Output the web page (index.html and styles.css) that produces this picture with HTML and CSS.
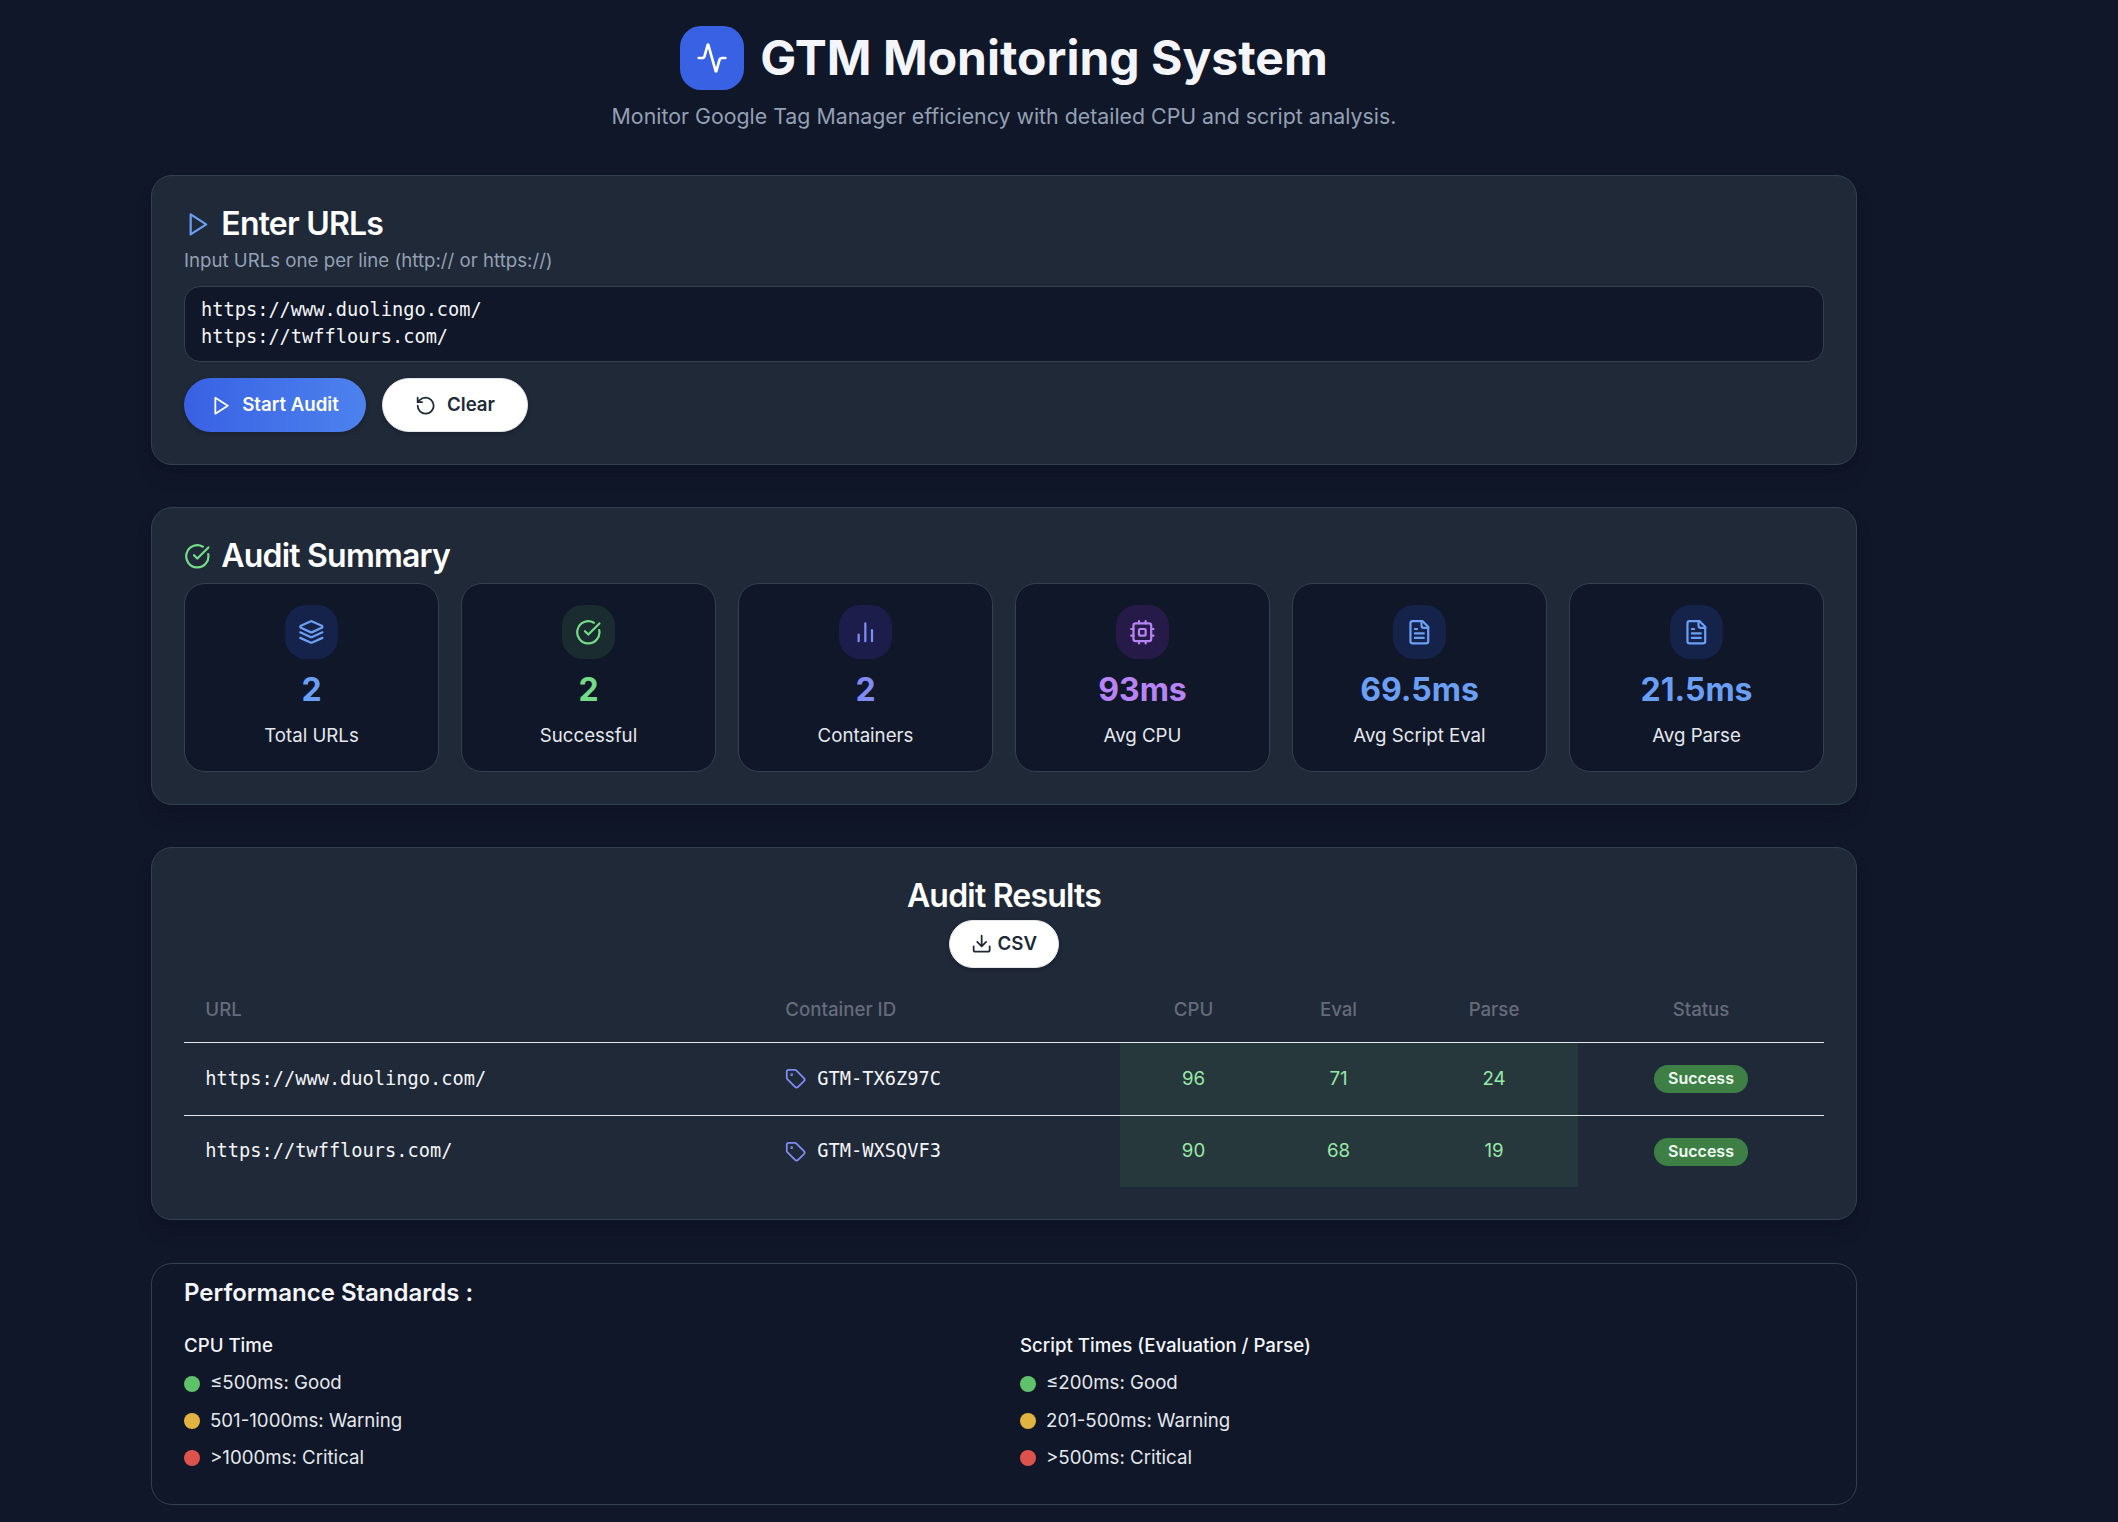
FILE: index.html
```html
<!DOCTYPE html>
<html lang="en">
<head>
<meta charset="utf-8">
<title>GTM Monitoring System</title>
<link rel="stylesheet" href="styles.css">
</head>
<body>
<svg class="sprite" aria-hidden="true">
  <symbol id="activity" viewBox="0 0 24 24"><path d="M22 12h-2.48a2 2 0 0 0-1.93 1.46l-2.35 8.36a.25.25 0 0 1-.48 0L9.24 2.18a.25.25 0 0 0-.48 0l-2.35 8.36A2 2 0 0 1 4.49 12H2"/></symbol>
  <symbol id="play" viewBox="0 0 24 24"><polygon points="6 3 20 12 6 21 6 3"/></symbol>
  <symbol id="reset" viewBox="0 0 24 24"><path d="M3 12a9 9 0 1 0 9-9 9.75 9.75 0 0 0-6.74 2.74L3 8"/><path d="M3 3v5h5"/></symbol>
  <symbol id="check" viewBox="0 0 24 24"><path d="M21.801 10A10 10 0 1 1 17 3.335"/><path d="m9 11 3 3L22 4"/></symbol>
  <symbol id="layers" viewBox="0 0 24 24"><path d="m12.83 2.18a2 2 0 0 0-1.66 0L2.6 6.08a1 1 0 0 0 0 1.83l8.58 3.91a2 2 0 0 0 1.66 0l8.58-3.9a1 1 0 0 0 0-1.83Z"/><path d="m22 12-9.17 4.16a2 2 0 0 1-1.66 0L2 12"/><path d="m22 17-9.17 4.16a2 2 0 0 1-1.66 0L2 17"/></symbol>
  <symbol id="bars" viewBox="0 0 24 24"><path d="M18 20V10M12 20V4M6 20v-6"/></symbol>
  <symbol id="cpu" viewBox="0 0 24 24"><rect x="4" y="4" width="16" height="16" rx="2"/><rect x="9" y="9" width="6" height="6" rx="1"/><path d="M15 2v2M15 20v2M2 15h2M2 9h2M20 15h2M20 9h2M9 2v2M9 20v2"/></symbol>
  <symbol id="file" viewBox="0 0 24 24"><path d="M15 2H6a2 2 0 0 0-2 2v16a2 2 0 0 0 2 2h12a2 2 0 0 0 2-2V7Z"/><path d="M14 2v4a2 2 0 0 0 2 2h4M10 9H8M16 13H8M16 17H8"/></symbol>
  <symbol id="download" viewBox="0 0 24 24"><path d="M21 15v4a2 2 0 0 1-2 2H5a2 2 0 0 1-2-2v-4"/><path d="m7 10 5 5 5-5M12 15V3"/></symbol>
  <symbol id="tag" viewBox="0 0 24 24"><path d="M12.586 2.586A2 2 0 0 0 11.172 2H4a2 2 0 0 0-2 2v7.172a2 2 0 0 0 .586 1.414l8.704 8.704a2.426 2.426 0 0 0 3.420 0l6.580-6.580a2.426 2.426 0 0 0 0-3.420z"/><circle cx="7.500" cy="7.500" r=".5" fill="currentColor"/></symbol>
</svg>

<main class="page">
  <header class="header">
    <div class="brand">
      <span class="logo"><svg class="icon"><use href="#activity"/></svg></span>
      <h1 class="brand-title">GTM Monitoring System</h1>
    </div>
    <p class="tagline">Monitor Google Tag Manager efficiency with detailed CPU and script analysis.</p>
  </header>

  <section class="card entry">
    <h2 class="title"><svg class="icon blue"><use href="#play"/></svg>Enter URLs</h2>
    <p class="hint">Input URLs one per line (http:// or https://)</p>
    <div class="urls">https://www.duolingo.com/<br>https://twfflours.com/</div>
    <div class="actions">
      <button class="btn start"><svg class="icon"><use href="#play"/></svg>Start Audit</button>
      <button class="btn clear"><svg class="icon"><use href="#reset"/></svg>Clear</button>
    </div>
  </section>

  <section class="card summary">
    <h2 class="title"><svg class="icon green"><use href="#check"/></svg>Audit Summary</h2>
    <div class="tiles">
      <div class="tile blue"><span class="badge-icon"><svg class="icon"><use href="#layers"/></svg></span><strong class="value">2</strong><span class="label">Total URLs</span></div>
      <div class="tile green"><span class="badge-icon"><svg class="icon"><use href="#check"/></svg></span><strong class="value">2</strong><span class="label">Successful</span></div>
      <div class="tile indigo"><span class="badge-icon"><svg class="icon"><use href="#bars"/></svg></span><strong class="value">2</strong><span class="label">Containers</span></div>
      <div class="tile purple"><span class="badge-icon"><svg class="icon"><use href="#cpu"/></svg></span><strong class="value">93ms</strong><span class="label">Avg CPU</span></div>
      <div class="tile blue"><span class="badge-icon"><svg class="icon"><use href="#file"/></svg></span><strong class="value">69.5ms</strong><span class="label">Avg Script Eval</span></div>
      <div class="tile blue"><span class="badge-icon"><svg class="icon"><use href="#file"/></svg></span><strong class="value">21.5ms</strong><span class="label">Avg Parse</span></div>
    </div>
  </section>

  <section class="card results">
    <h2 class="title">Audit Results</h2>
    <button class="btn csv"><svg class="icon"><use href="#download"/></svg>CSV</button>
    <table class="table">
      <colgroup><col class="c-url"><col class="c-id"><col class="c-cpu"><col class="c-eval"><col class="c-parse"><col class="c-status"></colgroup>
      <thead><tr><th class="left">URL</th><th class="left">Container ID</th><th>CPU</th><th>Eval</th><th>Parse</th><th>Status</th></tr></thead>
      <tbody>
        <tr><td class="mono">https://www.duolingo.com/</td><td class="mono"><span class="container-id"><svg class="icon indigo"><use href="#tag"/></svg>GTM-TX6Z97C</span></td><td class="good">96</td><td class="good">71</td><td class="good">24</td><td class="center"><span class="pill">Success</span></td></tr>
        <tr><td class="mono">https://twfflours.com/</td><td class="mono"><span class="container-id"><svg class="icon indigo"><use href="#tag"/></svg>GTM-WXSQVF3</span></td><td class="good">90</td><td class="good">68</td><td class="good">19</td><td class="center"><span class="pill">Success</span></td></tr>
      </tbody>
    </table>
  </section>

  <section class="card standards">
    <h3 class="standards-title">Performance Standards :</h3>
    <div class="standards-grid">
      <div>
        <h4 class="group">CPU Time</h4>
        <ul class="legend"><li><i class="dot ok"></i>≤500ms: Good</li><li><i class="dot warn"></i>501-1000ms: Warning</li><li><i class="dot bad"></i>&gt;1000ms: Critical</li></ul>
      </div>
      <div>
        <h4 class="group">Script Times (Evaluation / Parse)</h4>
        <ul class="legend"><li><i class="dot ok"></i>≤200ms: Good</li><li><i class="dot warn"></i>201-500ms: Warning</li><li><i class="dot bad"></i>&gt;500ms: Critical</li></ul>
      </div>
    </div>
  </section>
</main>
</body>
</html>
```
FILE: styles.css
```css
* { box-sizing: border-box; margin: 0; padding: 0; }

html, body { background: #101728; }

body {
  height: 1522px;
  overflow: hidden;
  color: #f3f5fa;
  font: 400 18.67px/26.67px Inter, "Liberation Sans", sans-serif;
}

.sprite { position: absolute; width: 0; height: 0; }

.icon {
  display: block;
  flex: none;
  width: 21.33px;
  height: 21.33px;
  fill: none;
  stroke: currentColor;
  stroke-width: 2;
  stroke-linecap: round;
  stroke-linejoin: round;
}

.blue { color: #6b9ff5; }
.green { color: #74dc87; }
.indigo { color: #818bf5; }
.purple { color: #b883f5; }

.page {
  display: flex;
  flex-direction: column;
  gap: 42px;
  width: 1706px;
  margin-left: 151px;
  padding-top: 26px;
}

.header { display: flex; flex-direction: column; align-items: center; height: 107px; }
.brand { display: flex; align-items: center; gap: 16px; height: 64px; }
.logo {
  display: grid;
  place-items: center;
  width: 64px;
  height: 64px;
  border-radius: 21px;
  background: #3861e3;
  color: #fff;
}
.logo .icon { width: 32px; height: 32px; }
.brand-title { padding-bottom: 2px; font-size: 48px; line-height: 53px; font-weight: 700; }
.tagline { margin-top: 9px; font-size: 21.33px; line-height: 34px; color: #94a0b4; }

.card {
  border: 1px solid #334050;
  border-radius: 21px;
  background: #202938;
  padding: 32px;
  box-shadow: 0 13px 20px -4px rgba(12, 15, 32, .2), 0 5px 8px -5px rgba(12, 15, 32, .2);
}

.title {
  display: flex;
  align-items: center;
  gap: 10.67px;
  font-size: 32px;
  line-height: 32px;
  font-weight: 600;
  letter-spacing: -.8px;
  color: #fff;
}
.title .icon { width: 26.67px; height: 26.67px; }

.entry { height: 290px; }
.hint { margin-top: 8px; line-height: 26px; color: #94a0b4; }
.urls {
  height: 76px;
  margin-top: 12px;
  padding: 9px 16px;
  border: 1px solid #334050;
  border-radius: 16px;
  background: #101728;
  font-family: "DejaVu Sans Mono", monospace;
  line-height: 27px;
}
.actions { display: flex; gap: 16px; margin-top: 16px; }
.btn {
  display: flex;
  align-items: center;
  justify-content: center;
  gap: 10.67px;
  height: 54px;
  border: 1px solid #e2e5ea;
  border-radius: 27px;
  background: #fff;
  color: #202938;
  font: 600 18.67px/26.67px Inter, "Liberation Sans", sans-serif;
  box-shadow: 0 2px 4px rgba(8, 10, 24, .25);
}
.start { width: 182px; padding: 1px 1px 0 0; border: 0; background: linear-gradient(90deg, #3861e3, #4d82ee); color: #fff; }
.clear { width: 146px; padding-top: 1px; }

.summary { height: 298px; }
.tiles { display: grid; grid-template-columns: repeat(6, 1fr); gap: 22px; margin-top: 11px; }
.tile {
  display: flex;
  flex-direction: column;
  align-items: center;
  height: 189px;
  padding-top: 21px;
  border: 1px solid #334050;
  border-radius: 21px;
  background: #101728;
}
.badge-icon { display: grid; place-items: center; width: 53.33px; height: 54px; border-radius: 21px; }
.badge-icon .icon { width: 26.67px; height: 26.67px; }
.blue .badge-icon { background: #15224a; }
.green .badge-icon { background: #1a2c2f; }
.indigo .badge-icon { background: #1c1d4a; }
.purple .badge-icon { background: #261b48; }
.value { margin-top: 9px; font-size: 32px; line-height: 43px; font-weight: 700; }
.label { margin-top: 12px; color: #e4e8ee; }

.results { display: flex; flex-direction: column; align-items: center; height: 373px; margin-bottom: 1px; }
.csv { gap: 5.33px; width: 110px; height: 48px; margin-top: 8px; flex: none; border-radius: 24px; }
.table { width: 1640px; margin-top: 11px; border-collapse: separate; border-spacing: 0; table-layout: fixed; }
.c-url { width: 580px; }
.c-id { width: 356px; }
.c-cpu { width: 147px; }
.c-eval { width: 143px; }
.c-parse { width: 168px; }
.c-status { width: 246px; }
.table th { height: 64px; font-weight: 500; color: #656b7a; border-bottom: 1px solid #e4e8ee; }
.table td { height: 71px; padding: 0 21.33px; }
.table tbody tr:first-child td { height: 73px; border-bottom: 1px solid #e4e8ee; }
.table .left { text-align: left; padding-left: 21.33px; }
.mono { font-family: "DejaVu Sans Mono", monospace; white-space: nowrap; }
.container-id { display: flex; align-items: center; gap: 10.67px; }
.good { background: #27383c; color: #98e8a8; text-align: center; }
.center { text-align: center; }
.pill {
  display: inline-block;
  width: 94px;
  height: 28px;
  border-radius: 14px;
  background: #3d7f44;
  color: #f0fbf2;
  font-size: 16px;
  line-height: 27px;
  font-weight: 600;
  vertical-align: middle;
}

.standards { height: 242px; padding-top: 11px; background: transparent; box-shadow: none; }
.standards-title { font-size: 24px; line-height: 36px; font-weight: 600; }
.standards-grid { display: grid; grid-template-columns: 1fr 1fr; gap: 32px; margin-top: 22px; }
.group { font-size: 18.67px; line-height: 26.67px; font-weight: 500; }
.legend { display: flex; flex-direction: column; gap: 10.67px; margin-top: 10.67px; list-style: none; color: #e4e8ee; }
.legend li { display: flex; align-items: center; gap: 10px; }
.dot { width: 16px; height: 16px; border-radius: 50%; }
.ok { background: #5fc26b; }
.warn { background: #e3b341; }
.bad { background: #de524c; }
```
